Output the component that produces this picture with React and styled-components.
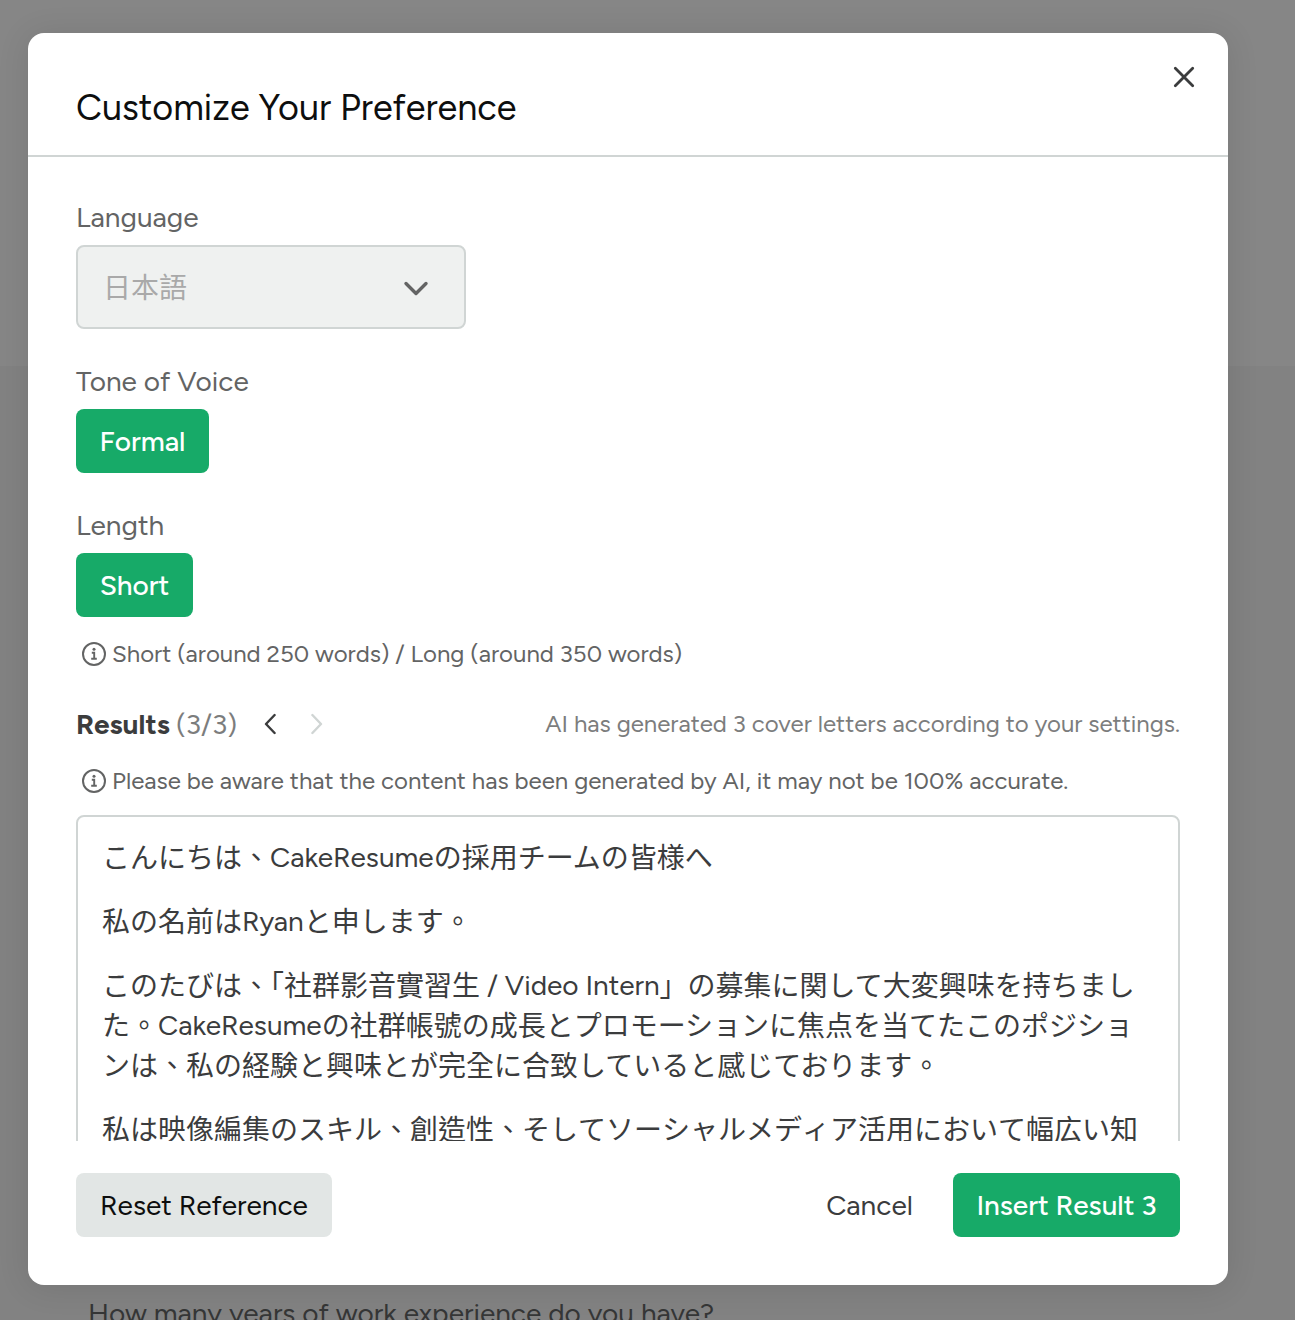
import React from "react";
import styled, { createGlobalStyle } from "styled-components";

const GlobalStyle = createGlobalStyle`
  *, *::before, *::after { box-sizing: border-box; }
  html, body { margin: 0; height: 100%; overflow: hidden; }
  body, button {
    font-family: Figtree, Lato, "Noto Sans CJK TC", sans-serif;
    font-size: 28px;
    line-height: 40px;
  }
`;

const Page = styled.div`
  position: relative;
  height: 1320px;
  overflow: hidden;
  display: flex;
  flex-direction: column;
  background: #828282;
`;

const PageBand = styled.div`
  height: 366px;
  flex: none;
  background: #868686;
`;

const PageBody = styled.div`
  flex: 1;
  display: flex;
  align-items: flex-end;
  padding-left: 88px;
`;

const PageQuestion = styled.div`
  height: 27px;
  color: #353636;
  white-space: nowrap;
`;

const Overlay = styled.div`
  position: absolute;
  inset: 0;
  padding: 33px 67px 35px 28px;
`;

const Dialog = styled.section`
  position: relative;
  display: flex;
  flex-direction: column;
  height: 1252px;
  border-radius: 16px;
  background: #fff;
  box-shadow: 0 2px 32px rgba(0, 0, 0, 0.1);
`;

const Header = styled.header`
  flex: none;
  height: 124px;
  padding: 50px 48px 0;
  border-bottom: 2px solid #d0d5d4;
`;

const Title = styled.h1`
  margin: 0;
  font-size: 36px;
  line-height: 50px;
  font-weight: 400;
  color: #0d0e0e;
  white-space: nowrap;
`;

const CloseButton = styled.button`
  position: absolute;
  top: 28px;
  right: 28px;
  width: 32px;
  height: 32px;
  padding: 0;
  border: 0;
  background: none;
  display: grid;
  place-items: center;
  color: #3b3c3d;
`;

const Body = styled.div`
  flex: none;
  height: 984px;
  overflow: hidden;
  padding: 40px 48px 0;
`;

const Field = styled.div`
  display: flex;
  flex-direction: column;
  align-items: flex-start;
  gap: 8px;
  margin-bottom: ${(p) => p.$gap ?? 32}px;
`;

const Label = styled.div`
  color: #636464;
  white-space: nowrap;
`;

const Select = styled.div`
  width: 390px;
  height: 84px;
  padding: 2px 34px 0 25px;
  display: flex;
  align-items: center;
  justify-content: space-between;
  border: 2px solid #d0d5d4;
  border-radius: 8px;
  background: #eff1f0;
  color: #a9a9a9;
`;

const Button = styled.button`
  width: ${(p) => p.$width}px;
  height: 64px;
  padding: 0;
  border: 0;
  border-radius: 8px;
  white-space: nowrap;
  font-weight: ${(p) => (p.$variant === "primary" ? 500 : 400)};
  background: ${(p) =>
    ({ primary: "#17aa68", muted: "#e2e6e5", plain: "transparent" })[p.$variant]};
  color: ${(p) => ({ primary: "#fff", muted: "#0d0e0e", plain: "#3b3c3d" })[p.$variant]};
`;

const Hint = styled.div`
  display: flex;
  align-items: center;
  gap: 6px;
  height: 36px;
  padding-left: 6px;
  font-size: 24px;
  line-height: 36px;
  color: #636464;
  white-space: nowrap;
`;

const ResultsBar = styled.div`
  display: flex;
  align-items: center;
  height: 40px;
  margin: 32px 0 19px;
  white-space: nowrap;
`;

const ResultsTitle = styled.div`
  width: 100px;
  font-weight: 700;
  color: #3b3c3d;
`;

const Count = styled.div`
  width: 76px;
  color: #7c7d7d;
`;

const Arrows = styled.div`
  display: flex;
  gap: 35px;
  margin-left: 12px;
`;

const Status = styled.div`
  margin-left: auto;
  font-size: 24px;
  color: #7c7d7d;
`;

const Letter = styled.div`
  height: 420px;
  margin-top: 16px;
  padding: 21px 24px;
  border: 2px solid #d0d5d4;
  border-radius: 8px;
  color: #3b3c3d;
`;

const Paragraph = styled.p`
  margin: 0 0 24px;
  white-space: nowrap;
  font-kerning: ${(p) => (p.$monospaced ? "none" : "auto")};
`;

const Latin = styled.span`
  line-height: 1;
  vertical-align: 1px;
  white-space: pre;
`;

const Footer = styled.footer`
  display: flex;
  padding: 32px 48px 48px;
`;

const FooterActions = styled.div`
  display: flex;
  gap: 16px;
  margin-left: auto;
`;

const InfoIcon = () => (
  <svg width="24" height="24" viewBox="0 0 24 24" fill="none" stroke="currentColor" strokeWidth="2">
    <circle cx="12" cy="12" r="11" />
    <path d="M9.8 10.8h2.4v6M9.2 16.8h5.6" strokeWidth="1.9" />
    <circle cx="12" cy="7.2" r="1.5" fill="currentColor" stroke="none" />
  </svg>
);

const Angle = ({ d, color }) => (
  <svg width="12" height="22" viewBox="0 0 12 22" fill="none" stroke={color} strokeWidth="2.4" strokeLinecap="round" strokeLinejoin="round">
    <path d={d} />
  </svg>
);

export default function App() {
  return (
    <>
      <GlobalStyle />
      <Page lang="zh-TW">
        <PageBand />
        <PageBody>
          <PageQuestion>How many years of work experience do you have?</PageQuestion>
        </PageBody>
        <Overlay>
          <Dialog role="dialog">
            <Header>
              <Title>Customize Your Preference</Title>
              <CloseButton aria-label="Close">
                <svg width="24" height="24" viewBox="0 0 24 24" fill="none" stroke="currentColor" strokeWidth="2.8" strokeLinecap="round">
                  <path d="M3.3 3.3l17.4 17.4M20.7 3.3L3.3 20.7" />
                </svg>
              </CloseButton>
            </Header>
            <Body>
              <Field>
                <Label>Language</Label>
                <Select>
                  日本語
                  <svg width="28" height="18" viewBox="0 0 28 18" fill="none" stroke="#636464" strokeWidth="3.4" strokeLinecap="round" strokeLinejoin="round">
                    <path d="M4 4.5l10 10L24 4.5" />
                  </svg>
                </Select>
              </Field>
              <Field>
                <Label>Tone of Voice</Label>
                <Button $variant="primary" $width={133}>Formal</Button>
              </Field>
              <Field $gap={19}>
                <Label>Length</Label>
                <Button $variant="primary" $width={117}>Short</Button>
              </Field>
              <Hint>
                <InfoIcon />
                Short (around 250 words) / Long (around 350 words)
              </Hint>
              <ResultsBar>
                <ResultsTitle>Results</ResultsTitle>
                <Count>(3/3)</Count>
                <Arrows>
                  <Angle color="#3b3c3d" d="M10.6 2L2 11l8.6 9" />
                  <Angle color="#d0d5d4" d="M1.4 2L10 11l-8.6 9" />
                </Arrows>
                <Status>AI has generated 3 cover letters according to your settings.</Status>
              </ResultsBar>
              <Hint>
                <InfoIcon />
                Please be aware that the content has been generated by AI, it may not be 100% accurate.
              </Hint>
              <Letter>
                <Paragraph>こんにちは、<Latin>CakeResume</Latin>の採用チームの皆様へ</Paragraph>
                <Paragraph>私の名前は<Latin>Ryan</Latin>と申します。</Paragraph>
                <Paragraph>
                  このたびは、「社群影音實習生<Latin> / Video Intern</Latin>」の募集に関して大変興味を持ちまし
                  <br />
                  た。<Latin>CakeResume</Latin>の社群帳號の成長とプロモーションに焦点を当てたこのポジショ
                  <br />
                  ンは、私の経験と興味とが完全に合致していると感じております。
                </Paragraph>
                <Paragraph $monospaced>私は映像編集のスキル、創造性、そしてソーシャルメディア活用において幅広い知</Paragraph>
              </Letter>
            </Body>
            <Footer>
              <Button $variant="muted" $width={256}>Reset Reference</Button>
              <FooterActions>
                <Button $variant="plain" $width={135}>Cancel</Button>
                <Button $variant="primary" $width={227}>Insert Result 3</Button>
              </FooterActions>
            </Footer>
          </Dialog>
        </Overlay>
      </Page>
    </>
  );
}
